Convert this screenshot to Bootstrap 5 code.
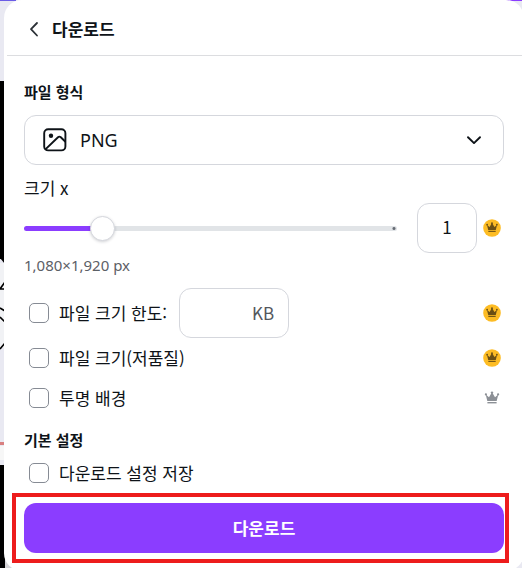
<!DOCTYPE html>
<html lang="ko">
<head>
<meta charset="utf-8">
<meta name="viewport" content="width=device-width, initial-scale=1">
<title>다운로드</title>
<link href="https://cdn.jsdelivr.net/npm/bootstrap@5.3.0/dist/css/bootstrap.min.css" rel="stylesheet">
<style>
  body { font-family: "Noto Sans", "Noto Sans CJK KR", sans-serif; font-size: 17px; line-height: 24px; color: #0e1318; background: #e9e9f2; }
  .stage { min-height: 100vh; overflow: hidden; padding-left: 4px; }
  .backdrop-art { left: 0; top: 0; width: 100%; height: 568px; }
  .sheet { margin-right: -2px; border-radius: 18px; padding-bottom: 8px; }
  .sheet-head { height: 56px; margin-left: 3px; padding: 3px 18px 0; border-bottom: 1px solid #dcdde0; gap: 8px; }
  .sheet-head h1 { font: 700 17px/24px "Noto Sans CJK KR", sans-serif; }
  .sheet-body { padding: 24px 20px 0; }
  .section-title { font: 700 15px/24px "Noto Sans CJK KR", sans-serif; }
  .ko { font-family: "Noto Sans CJK KR", sans-serif; }
  .field { height: 50px; border: 1px solid #d5d7dd; border-radius: 12px; color: #0e1318; background: #fff; }
  .format-box { margin: 11px 0; }
  .format-select { appearance: none; padding: 0 56px 0 55px; font-size: 18px; }
  .format-icon { left: 19px; top: 13px; }
  .format-caret { right: 22px; top: 17px; }
  .art { pointer-events: none; }
  .scale-row { gap: 20px; padding: 3px 3px 0 0; }
  .scale-side { gap: 6px; }
  .scale-value { width: 60px; padding: 0 0 3px; }
  .size-note { font-size: 15px; color: #5c6066; }
  .limit-row { margin-top: 11px; }
  .limit-row label { margin-right: 12px; }
  .limit-field { width: 110px; padding: 0 14px; }
  .limit-field input { outline: 0; background: transparent; }
  .limit-field span { color: #53575d; }
  .option { padding: 0 3px 0 5px; min-height: 40px; }
  .option .form-check-input { width: 20px; height: 20px; margin: 0 10px 0 0; border: 1px solid #868b94; border-radius: 5px; }
  .defaults-title { margin: 10px 0 1px; }
  .zoom-range { appearance: none; height: 26px; background: transparent; }
  .zoom-range::-webkit-slider-runnable-track { height: 5px; border-radius: 3px; background: radial-gradient(circle at calc(100% - 3px) 50%, #666b73 1px, transparent 2px), linear-gradient(90deg, #8b3dff 20%, #e1e4e7 20%); }
  .zoom-range::-webkit-slider-thumb { appearance: none; width: 25px; height: 25px; margin-top: -10px; border: 1px solid #d5d7dd; border-radius: 50%; background: #fff; box-shadow: 0 1px 3px rgba(30, 35, 50, .2); }
  .callout-frame { margin: 0 -5px 0 -12px; padding: 6px 1px 6px 8px; border: 4px solid #ed1c1c; }
  .download-btn, .download-btn:hover { height: 50px; border-radius: 12px; background: #8b3dff; color: #fff; font: 700 17px/24px "Noto Sans CJK KR", sans-serif; }
</style>
</head>
<body>
<svg width="0" height="0" class="position-absolute" aria-hidden="true">
  <defs>
    <g id="crown">
      <path d="M2.7 5.6L6 8.3 8.5 4h1L12 8.3l3.3-2.7-1.6 6.4H4.3z"/>
      <circle cx="2.9" cy="5.4" r="1.1"/><circle cx="9" cy="3.6" r="1.2"/><circle cx="15.1" cy="5.4" r="1.1"/>
      <path d="M4.4 13h9.2v1.4H4.4z"/>
    </g>
    <symbol id="pro" viewBox="0 0 18 18"><circle cx="9" cy="9" r="8.8" fill="#fdbc24"/><g transform="translate(1.8 1.4) scale(.8)" fill="#6b4f14"><use href="#crown"/></g></symbol>
    <symbol id="plain" viewBox="0 0 18 18"><g fill="#8c9096"><use href="#crown"/></g></symbol>
  </defs>
</svg>
<div class="stage position-relative">
  <svg class="backdrop-art position-absolute" aria-hidden="true">
    <rect width="16" height="1" fill="#6b5ce6"/>
    <rect x="505" width="30" height="1" fill="#8b3dff"/>
    <rect y="263" width="5" height="85" fill="#f1f2f5"/>
    <rect y="81" width="5" height="178" fill="#000"/>
    <path d="M0 258h5v6z" fill="#000"/>
    <path d="M0 289l5-7M0 289h5M0 308l5 3M0 317l5 5M0 349l5-6" fill="none" stroke="#000" stroke-width="1.6"/>
    <rect y="442" width="5" height="3" fill="#d98080"/>
    <rect y="446" width="5" height="14" fill="#f7f7f7"/>
    <path d="M0 540h22v28H0z" fill="#d4d4d8"/>
    <rect y="465" width="5" height="103" fill="#000"/>
  </svg>
  <main class="sheet bg-white position-relative">
    <header class="sheet-head d-flex align-items-center">
      <button type="button" class="btn p-0 border-0 d-flex" aria-label="뒤로">
        <svg width="19" height="20" viewBox="0 0 19 20" fill="none" stroke="#2b3036" stroke-width="1.8" stroke-linecap="round" stroke-linejoin="round"><path d="M12 4L6 10.2l6 6.3"/></svg>
      </button>
      <h1 class="m-0">다운로드</h1>
    </header>
    <form class="sheet-body" onsubmit="return false">
      <label for="format" class="section-title d-block">파일 형식</label>
      <div class="format-box position-relative">
        <select id="format" class="field format-select d-block w-100"><option>PNG</option></select>
        <svg class="art format-icon position-absolute" width="24" height="24" viewBox="0 0 24 24" fill="none" stroke="#0e1318" stroke-width="1.9" stroke-linejoin="round"><rect x="1.2" y="1.2" width="21.2" height="21.2" rx="4"/><path d="M2.4 21.4L15 9.2q1.4-1.2 2.8.1l4.6 4.5"/><circle cx="8" cy="7.8" r="2.2" fill="#0e1318" stroke="none"/></svg>
        <svg class="art format-caret position-absolute" width="16" height="16" viewBox="0 0 16 16" fill="none" stroke="#0e1318" stroke-width="1.9" stroke-linecap="round" stroke-linejoin="round"><path d="M2 5.2l6 5.9 6-5.9"/></svg>
      </div>
      <label for="scale" class="ko d-block">크기 x</label>
      <div class="scale-row d-flex align-items-center">
        <input type="range" id="scale" class="zoom-range flex-fill m-0" min="0" max="100" value="19">
        <div class="scale-side d-flex align-items-center">
          <input type="text" class="field scale-value ko text-center" value="1" aria-label="크기 배율">
          <svg width="18" height="18"><use href="#pro"/></svg>
        </div>
      </div>
      <div class="size-note">1,080×1,920 px</div>
      <div class="option limit-row d-flex align-items-center">
        <input type="checkbox" class="form-check-input flex-shrink-0" id="limit">
        <label class="ko" for="limit">파일 크기 한도:</label>
        <div class="field limit-field ko d-flex align-items-center">
          <input type="text" class="border-0 p-0 w-100" aria-label="파일 크기 한도 (KB)"><span>KB</span>
        </div>
        <svg class="ms-auto" width="18" height="18"><use href="#pro"/></svg>
      </div>
      <div class="option d-flex align-items-center">
        <input type="checkbox" class="form-check-input flex-shrink-0" id="lowq">
        <label class="ko" for="lowq">파일 크기(저품질)</label>
        <svg class="ms-auto" width="18" height="18"><use href="#pro"/></svg>
      </div>
      <div class="option d-flex align-items-center">
        <input type="checkbox" class="form-check-input flex-shrink-0" id="clear">
        <label class="ko" for="clear">투명 배경</label>
        <svg class="ms-auto" width="18" height="18"><use href="#plain"/></svg>
      </div>
      <h2 class="section-title defaults-title">기본 설정</h2>
      <div class="option d-flex align-items-center">
        <input type="checkbox" class="form-check-input flex-shrink-0" id="save">
        <label class="ko" for="save">다운로드 설정 저장</label>
      </div>
      <div class="callout-frame">
        <button type="submit" class="btn download-btn d-block w-100 border-0 p-0">다운로드</button>
      </div>
    </form>
  </main>
</div>
<script src="https://cdn.jsdelivr.net/npm/bootstrap@5.3.0/dist/js/bootstrap.bundle.min.js"></script>
</body>
</html>
